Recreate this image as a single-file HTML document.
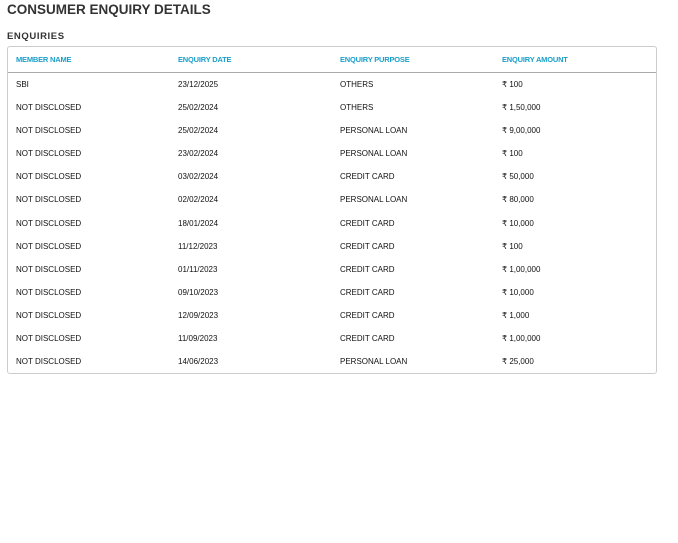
<!DOCTYPE html>
<html><head><style>
body{margin:0;background:#fff;font-family:"Liberation Sans",sans-serif;color:#222;width:678px;height:543px;position:relative}
h1{position:absolute;left:7px;top:1px;margin:0;font-size:13.5px;font-weight:bold;color:#333;line-height:18px}
h2{position:absolute;left:7px;top:31px;margin:0;font-size:9.5px;font-weight:bold;letter-spacing:0.6px;color:#333;line-height:12px}
.box{position:absolute;left:7px;top:46px;width:648px;height:326px;border:1px solid #ccc;border-radius:3px}
.hd{height:25px;border-bottom:1px solid #aaa;position:relative}
.row{height:23.1px;position:relative}
.c{position:absolute;font-size:8px;top:0;line-height:25px;white-space:nowrap;color:#111}
.hd .c{color:#1a9fc9;font-weight:bold;font-size:7.5px;letter-spacing:-0.2px}
.row .c{line-height:23px}
.c1{left:8px}.c2{left:170px}.c3{left:332px}.c4{left:494px}
</style></head><body>
<h1>CONSUMER ENQUIRY DETAILS</h1>
<h2>ENQUIRIES</h2>
<div class="box">
<div class="hd"><span class="c c1">MEMBER NAME</span><span class="c c2">ENQUIRY DATE</span><span class="c c3">ENQUIRY PURPOSE</span><span class="c c4">ENQUIRY AMOUNT</span></div>
<div class="rows">
<div class="row"><span class="c c1">SBI</span><span class="c c2">23/12/2025</span><span class="c c3">OTHERS</span><span class="c c4">₹ 100</span></div>
<div class="row"><span class="c c1">NOT DISCLOSED</span><span class="c c2">25/02/2024</span><span class="c c3">OTHERS</span><span class="c c4">₹ 1,50,000</span></div>
<div class="row"><span class="c c1">NOT DISCLOSED</span><span class="c c2">25/02/2024</span><span class="c c3">PERSONAL LOAN</span><span class="c c4">₹ 9,00,000</span></div>
<div class="row"><span class="c c1">NOT DISCLOSED</span><span class="c c2">23/02/2024</span><span class="c c3">PERSONAL LOAN</span><span class="c c4">₹ 100</span></div>
<div class="row"><span class="c c1">NOT DISCLOSED</span><span class="c c2">03/02/2024</span><span class="c c3">CREDIT CARD</span><span class="c c4">₹ 50,000</span></div>
<div class="row"><span class="c c1">NOT DISCLOSED</span><span class="c c2">02/02/2024</span><span class="c c3">PERSONAL LOAN</span><span class="c c4">₹ 80,000</span></div>
<div class="row"><span class="c c1">NOT DISCLOSED</span><span class="c c2">18/01/2024</span><span class="c c3">CREDIT CARD</span><span class="c c4">₹ 10,000</span></div>
<div class="row"><span class="c c1">NOT DISCLOSED</span><span class="c c2">11/12/2023</span><span class="c c3">CREDIT CARD</span><span class="c c4">₹ 100</span></div>
<div class="row"><span class="c c1">NOT DISCLOSED</span><span class="c c2">01/11/2023</span><span class="c c3">CREDIT CARD</span><span class="c c4">₹ 1,00,000</span></div>
<div class="row"><span class="c c1">NOT DISCLOSED</span><span class="c c2">09/10/2023</span><span class="c c3">CREDIT CARD</span><span class="c c4">₹ 10,000</span></div>
<div class="row"><span class="c c1">NOT DISCLOSED</span><span class="c c2">12/09/2023</span><span class="c c3">CREDIT CARD</span><span class="c c4">₹ 1,000</span></div>
<div class="row"><span class="c c1">NOT DISCLOSED</span><span class="c c2">11/09/2023</span><span class="c c3">CREDIT CARD</span><span class="c c4">₹ 1,00,000</span></div>
<div class="row"><span class="c c1">NOT DISCLOSED</span><span class="c c2">14/06/2023</span><span class="c c3">PERSONAL LOAN</span><span class="c c4">₹ 25,000</span></div>
</div>
</div>
</body></html>
